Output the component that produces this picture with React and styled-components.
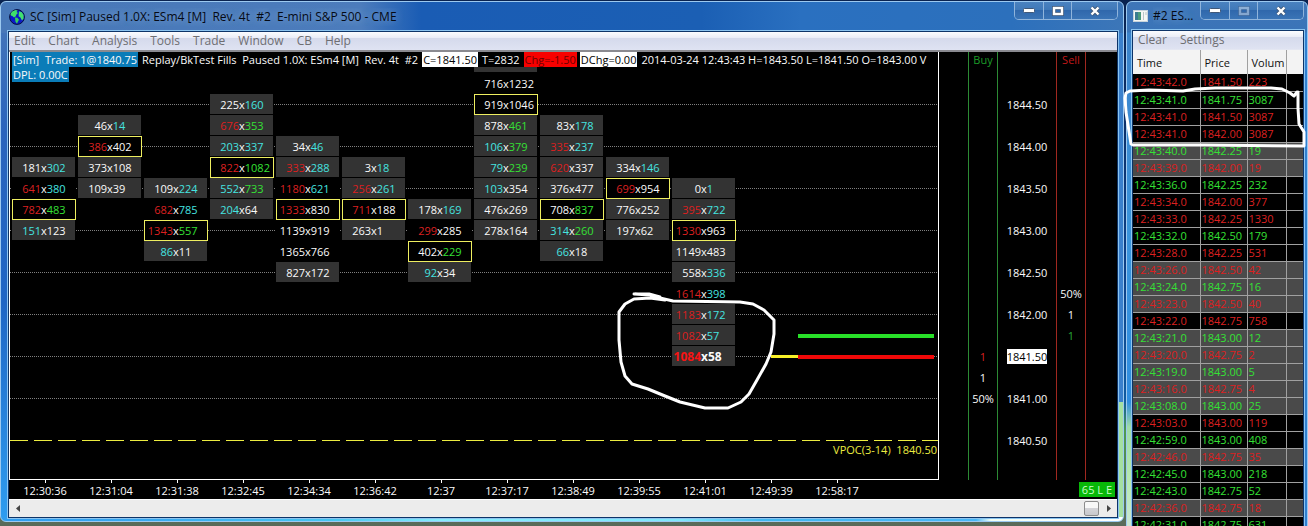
import React from "react";
import styled, { createGlobalStyle } from "styled-components";

const GlobalStyle = createGlobalStyle`
  * {
    box-sizing: border-box;
  }

  body {
    margin: 0;
    background: #0b2a5c;
    font-family: "Open Sans", "Noto Sans", sans-serif;
    font-size: 12px;
    overflow: hidden;
  }
`;

const RED = "#dc2020";
const GREEN = "#35e035";
const CYAN = "#45e4e0";
const WHITE = "#fafafa";

const inks = { r: RED, g: GREEN, c: CYAN, w: WHITE };

// Each column: first price row, then "bid|ask|ink pair|cell kind".
// Kinds: g = grey, b = black, p = point of control, l = last price.
const footprint = [
  { start: 5, cells: ["181|302|wc|g", "641|380|rc|b", "782|483|rg|p", "151|123|cw|g"] },
  { start: 3, cells: ["46|14|wc|g", "386|402|rw|p", "373|108|ww|g", "109|39|ww|g"] },
  { start: 6, cells: ["109|224|wc|g", "682|785|rc|b", "1343|557|rg|p", "86|11|cw|g"] },
  {
    start: 2,
    cells: ["225|160|wc|g", "676|353|rg|g", "203|337|cc|g", "822|1082|rg|p", "552|733|cg|g", "204|64|cw|g"],
  },
  {
    start: 4,
    cells: [
      "34|46|wc|g",
      "333|288|rc|g",
      "1180|621|rc|b",
      "1333|830|rw|p",
      "1139|919|ww|b",
      "1365|766|ww|b",
      "827|172|ww|g",
    ],
  },
  { start: 5, cells: ["3|18|wc|g", "256|261|rc|g", "711|188|rw|p", "263|1|ww|g"] },
  { start: 7, cells: ["178|169|wc|g", "299|285|rw|b", "402|229|wg|p", "92|34|cw|g"] },
  {
    start: 1,
    cells: [
      "716|1232|ww|b",
      "919|1046|ww|p",
      "878|461|wg|g",
      "106|379|cg|g",
      "79|239|cg|g",
      "103|354|cw|g",
      "476|269|ww|g",
      "278|164|ww|g",
    ],
  },
  {
    start: 3,
    cells: [
      "83|178|wc|g",
      "335|237|rc|g",
      "620|337|rw|g",
      "376|477|ww|g",
      "708|837|wg|p",
      "314|260|cg|g",
      "66|18|cw|g",
    ],
  },
  { start: 5, cells: ["334|146|wc|g", "699|954|rw|p", "776|252|ww|g", "197|62|ww|g"] },
  {
    start: 6,
    cells: [
      "0|1|wc|g",
      "395|722|rc|g",
      "1330|963|rw|p",
      "1149|483|ww|g",
      "558|336|wc|g",
      "1614|398|rc|b",
      "1183|172|rc|g",
      "1082|57|rc|g",
      "1084|58|rw|l",
    ],
  },
];

const prices = [
  "1844.50",
  "1844.00",
  "1843.50",
  "1843.00",
  "1842.50",
  "1842.00",
  "1841.50",
  "1841.00",
  "1840.50",
];

const times = [
  "12:30:36",
  "12:31:04",
  "12:31:38",
  "12:32:45",
  "12:34:34",
  "12:36:42",
  "12:37",
  "12:37:17",
  "12:38:49",
  "12:39:55",
  "12:41:01",
  "12:49:39",
  "12:58:17",
];

const trades = [
  ["12:43:42.0", "1841.50", 223, "r"],
  ["12:43:41.0", "1841.75", 3087, "g"],
  ["12:43:41.0", "1841.50", 3087, "r"],
  ["12:43:41.0", "1842.00", 3087, "r"],
  ["12:43:40.0", "1842.25", 19, "g"],
  ["12:43:39.0", "1842.00", 19, "r"],
  ["12:43:36.0", "1842.25", 232, "g"],
  ["12:43:34.0", "1842.00", 377, "r"],
  ["12:43:33.0", "1842.25", 1330, "r"],
  ["12:43:32.0", "1842.50", 179, "g"],
  ["12:43:28.0", "1842.25", 531, "r"],
  ["12:43:26.0", "1842.50", 42, "r"],
  ["12:43:24.0", "1842.75", 16, "g"],
  ["12:43:23.0", "1842.50", 40, "r"],
  ["12:43:22.0", "1842.75", 758, "r"],
  ["12:43:21.0", "1843.00", 12, "g"],
  ["12:43:20.0", "1842.75", 2, "r"],
  ["12:43:19.0", "1843.00", 5, "g"],
  ["12:43:16.0", "1842.75", 4, "r"],
  ["12:43:08.0", "1843.00", 25, "g"],
  ["12:43:03.0", "1843.00", 119, "r"],
  ["12:42:59.0", "1843.00", 408, "g"],
  ["12:42:46.0", "1842.75", 35, "r"],
  ["12:42:45.0", "1843.00", 218, "g"],
  ["12:42:43.0", "1842.75", 52, "g"],
  ["12:42:36.0", "1842.75", 18, "r"],
  ["12:42:31.0", "1842.75", 631, "g"],
];

const Desktop = styled.div`
  display: flex;
  align-items: flex-start;
  gap: 2px;
  height: 100vh;
  padding-top: 1px;
  overflow: hidden;
  background: linear-gradient(#0a2350 0%, #0d3f86 50%, #0f5aa0 76%, #4f9a50 82%, #5a6a5a 100%);
`;

const Window = styled.section`
  display: flex;
  flex-direction: column;
  position: relative;
  flex: ${(p) => (p.$side ? "0 0 182px" : "1 1 0")};
  min-width: 0;
  padding: ${(p) => (p.$side ? "0 3px 0 5px" : "0 5px 3px 7px")};
  border: 1px solid #9cc9f0;
  border-radius: 6px;
  background: ${(p) =>
    p.$side
      ? "linear-gradient(#3f76b8 0, #3a74b8 30px, transparent 31px), linear-gradient(90deg, transparent 50%, #2f7fd0 50%), linear-gradient(#3a80c8 0, #3a94dc 240px, #2f8de0 400px, #9fdca8 425px, #b8eab0 480px, #cfe6dc 100%)"
      : "linear-gradient(90deg, #4878b8 0, #4c7cbc 360px, #1a5cb4 420px, #1b5fb4 700px, #2a70c0 800px, #2c70bc 1010px, #3c76b8 100%) top / 100% 31px no-repeat, linear-gradient(90deg, #2f9df0 0, #38aaf2 150px, #45c6f0 330px, #86eefc 440px, #7fe8fa 680px, #40b8f0 760px, #48b8f8 975px, #f2fff4 990px, #fff 100%) bottom / 100% 4px no-repeat, linear-gradient(90deg, transparent 50%, #3a80cc 50%) 0 0 / 100% 400px no-repeat, linear-gradient(90deg, transparent 50%, #a4e0a0 50%) 0 400px / 100% 116px no-repeat, linear-gradient(#4878b8 0, #2a64bc 130px, #1f66c4 300px, #2f9df0 100%)"};
`;

const TitleBar = styled.header`
  display: flex;
  align-items: center;
  height: ${(p) => (p.$side ? 28 : 29)}px;
  gap: 5px;
  padding-left: 1px;
`;

const TitleText = styled.h1`
  flex: 1;
  min-width: 0;
  margin: 0;
  overflow: hidden;
  color: #050a14;
  font-size: 12px;
  font-weight: 400;
  line-height: 18px;
  white-space: pre;
  text-shadow: 0 0 8px rgba(180, 205, 240, 0.7);
`;

const CaptionButtons = styled.div`
  display: flex;
  align-self: flex-start;
  height: 18px;
  border: 1px solid #8fb4dc;
  border-top: 0;
  border-radius: 0 0 5px 5px;
  overflow: hidden;
`;

const CaptionButton = styled.button`
  display: flex;
  align-items: center;
  justify-content: center;
  width: ${(p) => (p.$wide ? 46 : 28)}px;
  padding: 0;
  border: 0;
  border-left: ${(p) => (p.$first ? 0 : "1px solid #8fb4dc")};
  background: linear-gradient(#4a82c0 0, #3f78b8 50%, #3068ac 50%, #3a74b6 100%);
`;

const Client = styled.div`
  display: flex;
  flex-direction: column;
  border: 1px solid #0d3468;
  box-shadow: 0 0 0 1px #8cc4f0;
  background: #000;
`;

const MenuBar = styled.nav`
  display: flex;
  gap: 13px;
  height: ${(p) => (p.$side ? 19 : 20)}px;
  padding: 0 5px;
  border-bottom: ${(p) => (p.$side ? "1px solid #e4e7f2" : "2px solid #8a8a90")};
  background: linear-gradient(#fbfcfe 0, #e8ebf6 35%, #d5daec 36%, #dfe3f2 100%);
`;

const MenuItem = styled.button`
  padding: 0;
  border: 0;
  background: none;
  color: #6e6e72;
  font: inherit;
  line-height: 16px;
`;

const ChartArea = styled.div`
  display: flex;
  line-height: 15px;
`;

const Plot = styled.div`
  position: relative;
  flex: 1;
  min-width: 0;
  padding: 0 0 7px 2px;
  border: 1px solid #fff;
  border-top: 0;
  overflow: hidden;
`;

const PlotGrid = styled.div`
  display: grid;
  grid-template-columns: repeat(11, 66px) 33px 27px minmax(0, 1fr);
  grid-template-rows: repeat(20, 21px);
`;

const GridLine = styled.div`
  grid-column: 1 / -1;
  grid-row: ${(p) => p.$row};
  align-self: center;
  height: 1px;
  margin-left: -2px;
  background: repeating-linear-gradient(90deg, #808080 0 1px, #000 1px 2px);
`;

const VpocLine = styled(GridLine)`
  background: repeating-linear-gradient(90deg, #ecec40 0 18px, #000 18px 24px);
`;

const VpocLabel = styled.span`
  grid-column: 9 / -1;
  grid-row: 19 / 21;
  align-self: center;
  justify-self: end;
  padding: 0 1px 4px 0;
  color: #ecec40;
  font-size: 11px;
  white-space: pre;
`;

const QuoteBar = styled.div`
  grid-column: 14;
  grid-row: ${(p) => p.$row};
  align-self: center;
  height: 4px;
  margin-right: 4px;
  background: ${(p) => p.$color};
`;

const LastMark = styled(QuoteBar)`
  grid-column: 13;
  height: 3px;
  margin-right: 0;
`;

const cellBorders = { p: "#eeee60", b: "#000", g: "#333", l: "#333" };

const Cell = styled.div`
  display: grid;
  grid-template-columns: 28px auto 1fr;
  grid-column: ${(p) => p.$col};
  grid-row: ${(p) => p.$row};
  z-index: 1;
  height: ${(p) => (p.$kind === "p" ? 21 : 20)}px;
  width: ${(p) => (p.$kind === "p" ? 64 : 63)}px;
  border: 1px solid ${(p) => cellBorders[p.$kind]};
  background: ${(p) => (p.$kind === "p" || p.$kind === "b" ? "#000" : "#333")};
  color: ${WHITE};
  font-size: ${(p) => (p.$kind === "l" ? 12 : 11)}px;
  font-weight: ${(p) => (p.$kind === "l" ? 700 : 400)};
  line-height: 19px;
`;

const Bid = styled.span`
  justify-self: end;
  color: ${(p) => p.$ink};
`;

const Ask = styled.span`
  color: ${(p) => p.$ink};
`;

const HeaderStrip = styled.div`
  position: absolute;
  top: 0;
  left: 2px;
  right: 0;
  z-index: 2;
  overflow: hidden;
  color: ${WHITE};
  font-size: 11px;
  white-space: pre;
`;

const HeaderLine = styled.div`
  display: flex;
  gap: 3px;
  height: 15px;
  background: ${(p) => (p.$solid ? "#000" : "none")};
`;

const Tag = styled.span`
  padding: 0 1px;
  background: ${(p) => p.$bg || "none"};
  color: ${(p) => p.$ink || "inherit"};
`;

const OrderPanel = styled.aside`
  display: grid;
  flex: 0 0 178px;
  grid-template-columns: 30px 58px 30px;
  padding-left: 29px;
  color: ${WHITE};
  font-size: 11px;
`;

const Lane = styled.div`
  display: grid;
  grid-template-rows: repeat(20, 21px);
  align-items: center;
  justify-items: center;
  border: 0 solid ${(p) => p.$line};
  border-width: 0 ${(p) => (p.$line ? "1px" : 0)};
`;

const LaneText = styled.span`
  grid-row: ${(p) => p.$row};
  align-self: ${(p) => (p.$row === 1 ? "start" : "center")};
  background: ${(p) => (p.$last ? "#fff" : "none")};
  color: ${(p) => (p.$last ? "#000" : p.$ink || "inherit")};
`;

const TimeAxis = styled.footer`
  display: flex;
  justify-content: space-between;
  height: 19px;
  padding: 0 2px 0 3px;
  color: ${WHITE};
  font-size: 11px;
`;

const TimeScale = styled.ol`
  display: flex;
  margin: 0;
  padding: 0;
  list-style: none;
`;

const TimeMark = styled.li`
  display: flex;
  flex-direction: column;
  align-items: center;
  width: 66px;
  line-height: 15px;

  &::before {
    content: "";
    width: 1px;
    height: 3px;
    background: #fff;
  }
`;

const StatusBadge = styled.span`
  align-self: center;
  padding: 0 3px;
  background: #08b808;
  color: #c8ffc8;
  line-height: 15px;
`;

const ScrollBar = styled.div`
  display: flex;
  height: 18px;
  border-top: 1px solid #fff;
  background: #ececec;
`;

const ScrollArrow = styled.button`
  display: flex;
  align-items: center;
  justify-content: center;
  width: 17px;
  padding: 0;
  border: 0;
  background: none;
`;

const ScrollTrack = styled.div`
  display: flex;
  flex: 1;
  justify-content: flex-end;
  padding: 1px;
`;

const ScrollThumb = styled.div`
  width: 15px;
  border: 1px solid #8c8c8c;
  border-radius: 2px;
  background: linear-gradient(#f8f8f8 0 45%, #d4d4d8 50%, #c8c8cc 100%);
`;

const TradeTable = styled.table`
  width: 100%;
  table-layout: fixed;
  border-collapse: collapse;
  font-size: 11px;
`;

const HeadCell = styled.th`
  height: 24px;
  padding: 0 0 0 4px;
  border-right: 1px solid #a0a0a0;
  background: #f3f3f3;
  color: #111;
  font-weight: 400;
  text-align: left;
  white-space: nowrap;

  &:last-child {
    border-right: 0;
  }
`;

const TradeRow = styled.tr`
  height: 17px;
  background: ${(p) => (p.$dim ? "#4a4a4a" : "#000")};
  color: ${(p) => p.$ink};
`;

const TradeCell = styled.td`
  padding: 0 0 0 1px;
  border-right: 1px solid #a0a0a0;
  border-bottom: 1px solid #a0a0a0;
  line-height: 16px;
  white-space: nowrap;

  &:last-child {
    border-right: 0;
  }
`;

const Scribble = styled.svg`
  position: absolute;
  top: ${(p) => p.$top}px;
  left: ${(p) => p.$left}px;
  z-index: 3;
  pointer-events: none;
  fill: none;
  stroke: #fff;
  stroke-width: 3;
  stroke-linecap: round;
  stroke-linejoin: round;
`;

const Globe = () => (
  <svg width="16" height="16" viewBox="0 0 16 16" aria-hidden="true">
    <circle cx="8" cy="8" r="7.4" fill="#0c18c8" stroke="#04103c" />
    <path d="M1.6 4.6 3.6 2.2 6.6 1 8.6 1.4 7.6 3 9 4 7.4 5.6 6.6 7.6 5 8.4 3.4 7 1.8 6.4z" fill="#3fe06a" />
    <path d="M6 8.4 8.4 8.8 10 10.8 8.8 12.8 8 14.8 6.4 12.6z" fill="#35d05c" />
    <path d="M10 2.2 12.8 3.2 14.6 6 14.6 9.4 13 11.4 11.4 8.6 9.6 7.2 9.8 4.6z" fill="#42e070" />
  </svg>
);

const SheetIcon = () => (
  <svg width="15" height="12" viewBox="0 0 15 12" aria-hidden="true">
    <rect x=".5" y=".5" width="14" height="11" fill="#f4f6f4" stroke="#c8d4dc" />
    <rect x="2" y="2" width="6" height="8" fill="#4a9a7c" />
    <rect x="2" y="2" width="3" height="8" fill="#3a7c90" />
    <path d="M10.5 2v8M13 2v3" stroke="#b8c4c8" />
  </svg>
);

const Captions = ({ dimMax }) => (
  <CaptionButtons>
    <CaptionButton $first aria-label="Minimize">
      <svg width="12" height="5">
        <rect x=".5" y=".5" width="11" height="4" rx="1" fill="#fff" stroke="#405878" />
      </svg>
    </CaptionButton>
    <CaptionButton aria-label="Maximize">
      <svg width="12" height="10" opacity={dimMax ? 0.4 : 1}>
        <rect x="2" y="2" width="8" height="6" fill="none" stroke="#405878" strokeWidth="4" />
        <rect x="2" y="2" width="8" height="6" fill="none" stroke="#fff" strokeWidth="2.4" />
      </svg>
    </CaptionButton>
    <CaptionButton $wide aria-label="Close">
      <svg width="12" height="10">
        <path d="M2.5 1.5l7 7M9.5 1.5l-7 7" stroke="#405878" strokeWidth="4" />
        <path d="M2.5 1.5l7 7M9.5 1.5l-7 7" stroke="#fff" strokeWidth="2.4" />
      </svg>
    </CaptionButton>
  </CaptionButtons>
);

const FootprintCell = ({ data, col, row }) => {
  const [bid, ask, pair, kind] = data.split("|");
  return (
    <Cell $kind={kind} $col={col} $row={row}>
      <Bid $ink={kind === "l" ? "#f81414" : inks[pair[0]]}>{bid}</Bid>
      <span>x</span>
      <Ask $ink={inks[pair[1]]}>{ask}</Ask>
    </Cell>
  );
};

const ChartPlot = () => (
  <Plot>
    <HeaderStrip>
      <HeaderLine $solid>
        <Tag $bg="#0a7cb8">[Sim]  Trade: 1@1840.75</Tag>
        <Tag>Replay/BkTest Fills  Paused 1.0X: ESm4 [M]  Rev. 4t  #2</Tag>
        <Tag $bg="#fff" $ink="#000">C=1841.50</Tag>
        <Tag>T=2832</Tag>
        <Tag $bg="#f80000" $ink="#6c0000">Chg=-1.50</Tag>
        <Tag $bg="#fff" $ink="#000">DChg=0.00</Tag>
        <Tag>2014-03-24 12:43:43 H=1843.50 L=1841.50 O=1843.00 V</Tag>
      </HeaderLine>
      <HeaderLine>
        <Tag $bg="#0a7cb8">DPL: 0.00C</Tag>
      </HeaderLine>
    </HeaderStrip>
    <PlotGrid>
      {prices.slice(0, -1).map((price, i) => (
        <GridLine key={price} $row={3 + i * 2} />
      ))}
      <VpocLine $row={19} />
      <VpocLabel>VPOC(3-14)  1840.50</VpocLabel>
      <Cell $kind="g" $col={8} $row={1} />
      {footprint.map((column, c) =>
        column.cells.map((data, i) => (
          <FootprintCell key={data} data={data} col={c + 1} row={column.start + i + 1} />
        ))
      )}
      <QuoteBar $row={14} $color="#28e028" />
      <QuoteBar $row={15} $color="#f00808" />
      <LastMark $row={15} $color="#f8f028" />
    </PlotGrid>
  </Plot>
);

const ChartWindow = () => (
  <Window>
    <TitleBar>
      <Globe />
      <TitleText>SC [Sim] Paused 1.0X: ESm4 [M]  Rev. 4t  #2  E-mini S&P 500 - CME</TitleText>
      <Captions />
    </TitleBar>
    <Client>
      <MenuBar>
        {["Edit", "Chart", "Analysis", "Tools", "Trade", "Window", "CB", "Help"].map((name) => (
          <MenuItem key={name}>{name}</MenuItem>
        ))}
      </MenuBar>
      <ChartArea>
        <ChartPlot />
        <OrderPanel>
          <Lane $line="#2c8a34">
            <LaneText $row={1} $ink="#1c9c28">Buy</LaneText>
            <LaneText $row={15} $ink={RED}>1</LaneText>
            <LaneText $row={16}>1</LaneText>
            <LaneText $row={17}>50%</LaneText>
          </Lane>
          <Lane>
            {prices.map((price, i) => (
              <LaneText key={price} $row={3 + i * 2} $last={price === "1841.50"}>
                {price}
              </LaneText>
            ))}
          </Lane>
          <Lane $line="#a02820">
            <LaneText $row={1} $ink="#c01818">Sell</LaneText>
            <LaneText $row={12}>50%</LaneText>
            <LaneText $row={13}>1</LaneText>
            <LaneText $row={14} $ink="#28a838">1</LaneText>
          </Lane>
        </OrderPanel>
      </ChartArea>
      <TimeAxis>
        <TimeScale>
          {times.map((time) => (
            <TimeMark key={time}>{time}</TimeMark>
          ))}
        </TimeScale>
        <StatusBadge>65 L E</StatusBadge>
      </TimeAxis>
      <ScrollBar>
        <ScrollArrow aria-label="Scroll left">
          <svg width="4" height="7">
            <path d="M4 0v7L0 3.5z" fill="#444" />
          </svg>
        </ScrollArrow>
        <ScrollTrack>
          <ScrollThumb />
        </ScrollTrack>
        <ScrollArrow aria-label="Scroll right">
          <svg width="4" height="7">
            <path d="M0 0v7L4 3.5z" fill="#444" />
          </svg>
        </ScrollArrow>
      </ScrollBar>
    </Client>
    <Scribble $top={288} $left={615} width="162" height="122" viewBox="616 290 162 122">
      <path d="M635 294h14l11 3M634 294l16 1 10 3 13 3 67 1 13 2 11 6 10 10v14l-3 18-5 12-9 16-8 14-8 8-13 6h-23l-25-6-15-6-17-7-16-5-7-8-4-14-2-22v-28l6-8 9-5 16-1 15 2" />
    </Scribble>
  </Window>
);

const TradesWindow = () => (
  <Window $side>
    <TitleBar $side>
      <SheetIcon />
      <TitleText>#2 ES...</TitleText>
      <Captions dimMax />
    </TitleBar>
    <Client>
      <MenuBar $side>
        <MenuItem>Clear</MenuItem>
        <MenuItem>Settings</MenuItem>
      </MenuBar>
      <TradeTable>
        <colgroup>
          <col width="67" />
          <col width="47" />
          <col width="39" />
          <col />
        </colgroup>
        <thead>
          <tr>
            <HeadCell>Time</HeadCell>
            <HeadCell>Price</HeadCell>
            <HeadCell>Volum</HeadCell>
            <HeadCell />
          </tr>
        </thead>
        <tbody>
          {trades.map(([time, price, volume, side], i) => (
            <TradeRow key={i} $dim={volume < 50} $ink={inks[side]}>
              <TradeCell>{time}</TradeCell>
              <TradeCell>{price}</TradeCell>
              <TradeCell>{volume}</TradeCell>
              <TradeCell />
            </TradeRow>
          ))}
        </tbody>
      </TradeTable>
    </Client>
    <Scribble $top={82} $left={-5} width="186" height="68" viewBox="1122 84 186 68">
      <path d="M1297 92l-3 4-4-3-8-4-11-1h-56l-20 1-12 2-34-1-19 1-4 2-1 5 1 14 2 13 3 19 2 1h72l99 1v-14l-5-8-1-16v-16" />
    </Scribble>
  </Window>
);

const App = () => (
  <>
    <GlobalStyle />
    <Desktop>
      <ChartWindow />
      <TradesWindow />
    </Desktop>
  </>
);

export default App;
